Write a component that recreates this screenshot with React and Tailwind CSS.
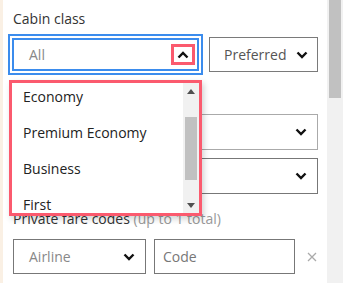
import React from 'react';

const ChevronDown = ({ className = '' }) => (
  <svg width="12" height="8" viewBox="0 0 12 8" className={className}>
    <polyline points="1.5,1.5 6,6 10.5,1.5" fill="none" stroke="#111" strokeWidth="2.4" />
  </svg>
);

const ChevronUp = () => (
  <svg width="12" height="8" viewBox="0 0 12 8">
    <polyline points="1.5,6.5 6,2 10.5,6.5" fill="none" stroke="#111" strokeWidth="2.4" />
  </svg>
);

const App = () => {
  const options = ['Economy', 'Premium Economy', 'Business', 'First'];

  return (
    <div className="w-[343px] h-[283px] flex overflow-hidden bg-white text-[14px] font-['Open_Sans',sans-serif]">
      {/* left page edge */}
      <div className="w-[3px] shrink-0 bg-[#faf0e4]" />

      {/* form area */}
      <div className="relative flex-1 pl-[10px] pr-[9px] pt-[9px]">
        <div className="h-5 leading-5 text-[#333]">Cabin class</div>

        <div className="mt-2 flex items-center">
          <div className="-ml-px w-[187px] h-[33px] flex items-center justify-between pl-[15px] pr-[2px] border-2 border-[#3b8ced] shadow-[0_0_0_2px_#fff,0_0_0_4px_#3b8ced]">
            <span className="text-[#888]">All</span>
            <span className="w-6 h-[21px] flex items-center justify-center border-[3px] border-[#fb5a6e]">
              <ChevronUp />
            </span>
          </div>
          <div className="ml-[10px] w-[109px] h-[35px] flex items-center justify-between pl-[14px] pr-[9px] border border-[#7a7a7a]">
            <span className="text-[#555]">Preferred</span>
            <ChevronDown />
          </div>
        </div>

        <div className="mt-[42px] h-9 flex items-center justify-end pr-[10px] border border-[#aaa]">
          <ChevronDown />
        </div>
        <div className="mt-2 h-9 flex items-center justify-end pr-[10px] border border-[#777]">
          <ChevronDown />
        </div>

        <div className="mt-[15px] h-5 leading-5">
          <span className="text-[#333]">Private fare codes </span>
          <span className="text-[#999]">(up to 1 total)</span>
        </div>

        <div className="mt-[10px] flex items-center">
          <div className="w-[133px] h-[35px] flex items-center justify-between pl-[15px] pr-[10px] border border-[#777]">
            <span className="text-[#888]">Airline</span>
            <ChevronDown />
          </div>
          <div className="ml-2 w-[141px] h-[35px] flex items-center pl-[8px] border border-[#777]">
            <span className="text-[#777]">Code</span>
          </div>
          <svg width="10" height="10" viewBox="0 0 10 10" className="ml-[12px]">
            <path d="M1 1L9 9M9 1L1 9" stroke="#aaa" strokeWidth="1.3" />
          </svg>
        </div>

        {/* open cabin class list */}
        <div className="absolute left-[6px] top-[80px] w-[193px] h-[136px] flex border-[3px] border-[#fb5a6e] bg-white shadow-[2px_3px_6px_rgba(0,0,0,0.18)]">
          <div className="flex-1 overflow-hidden">
            <div className="-mt-[5px]">
              {options.map((opt) => (
                <div key={opt} className="h-9 flex items-center pl-[11px] text-[#222]">
                  {opt}
                </div>
              ))}
            </div>
          </div>
          <div className="w-4 flex flex-col bg-[#f1f1f1]">
            <div className="h-4 flex items-center justify-center">
              <svg width="8" height="5" viewBox="0 0 8 5"><polygon points="0,5 4,0 8,5" fill="#505050" /></svg>
            </div>
            <div className="flex-1 relative">
              <div className="absolute left-[2px] right-[2px] top-[18px] h-[63px] bg-[#c1c1c1]" />
            </div>
            <div className="h-4 flex items-center justify-center">
              <svg width="8" height="5" viewBox="0 0 8 5"><polygon points="0,0 8,0 4,5" fill="#505050" /></svg>
            </div>
          </div>
        </div>
      </div>

      {/* page scrollbar */}
      <div className="w-4 shrink-0 bg-[#f1f1f1] pt-0">
        <div className="mx-[2px] h-[98px] bg-[#c1c1c1]" />
      </div>
    </div>
  );
};

export default App;
